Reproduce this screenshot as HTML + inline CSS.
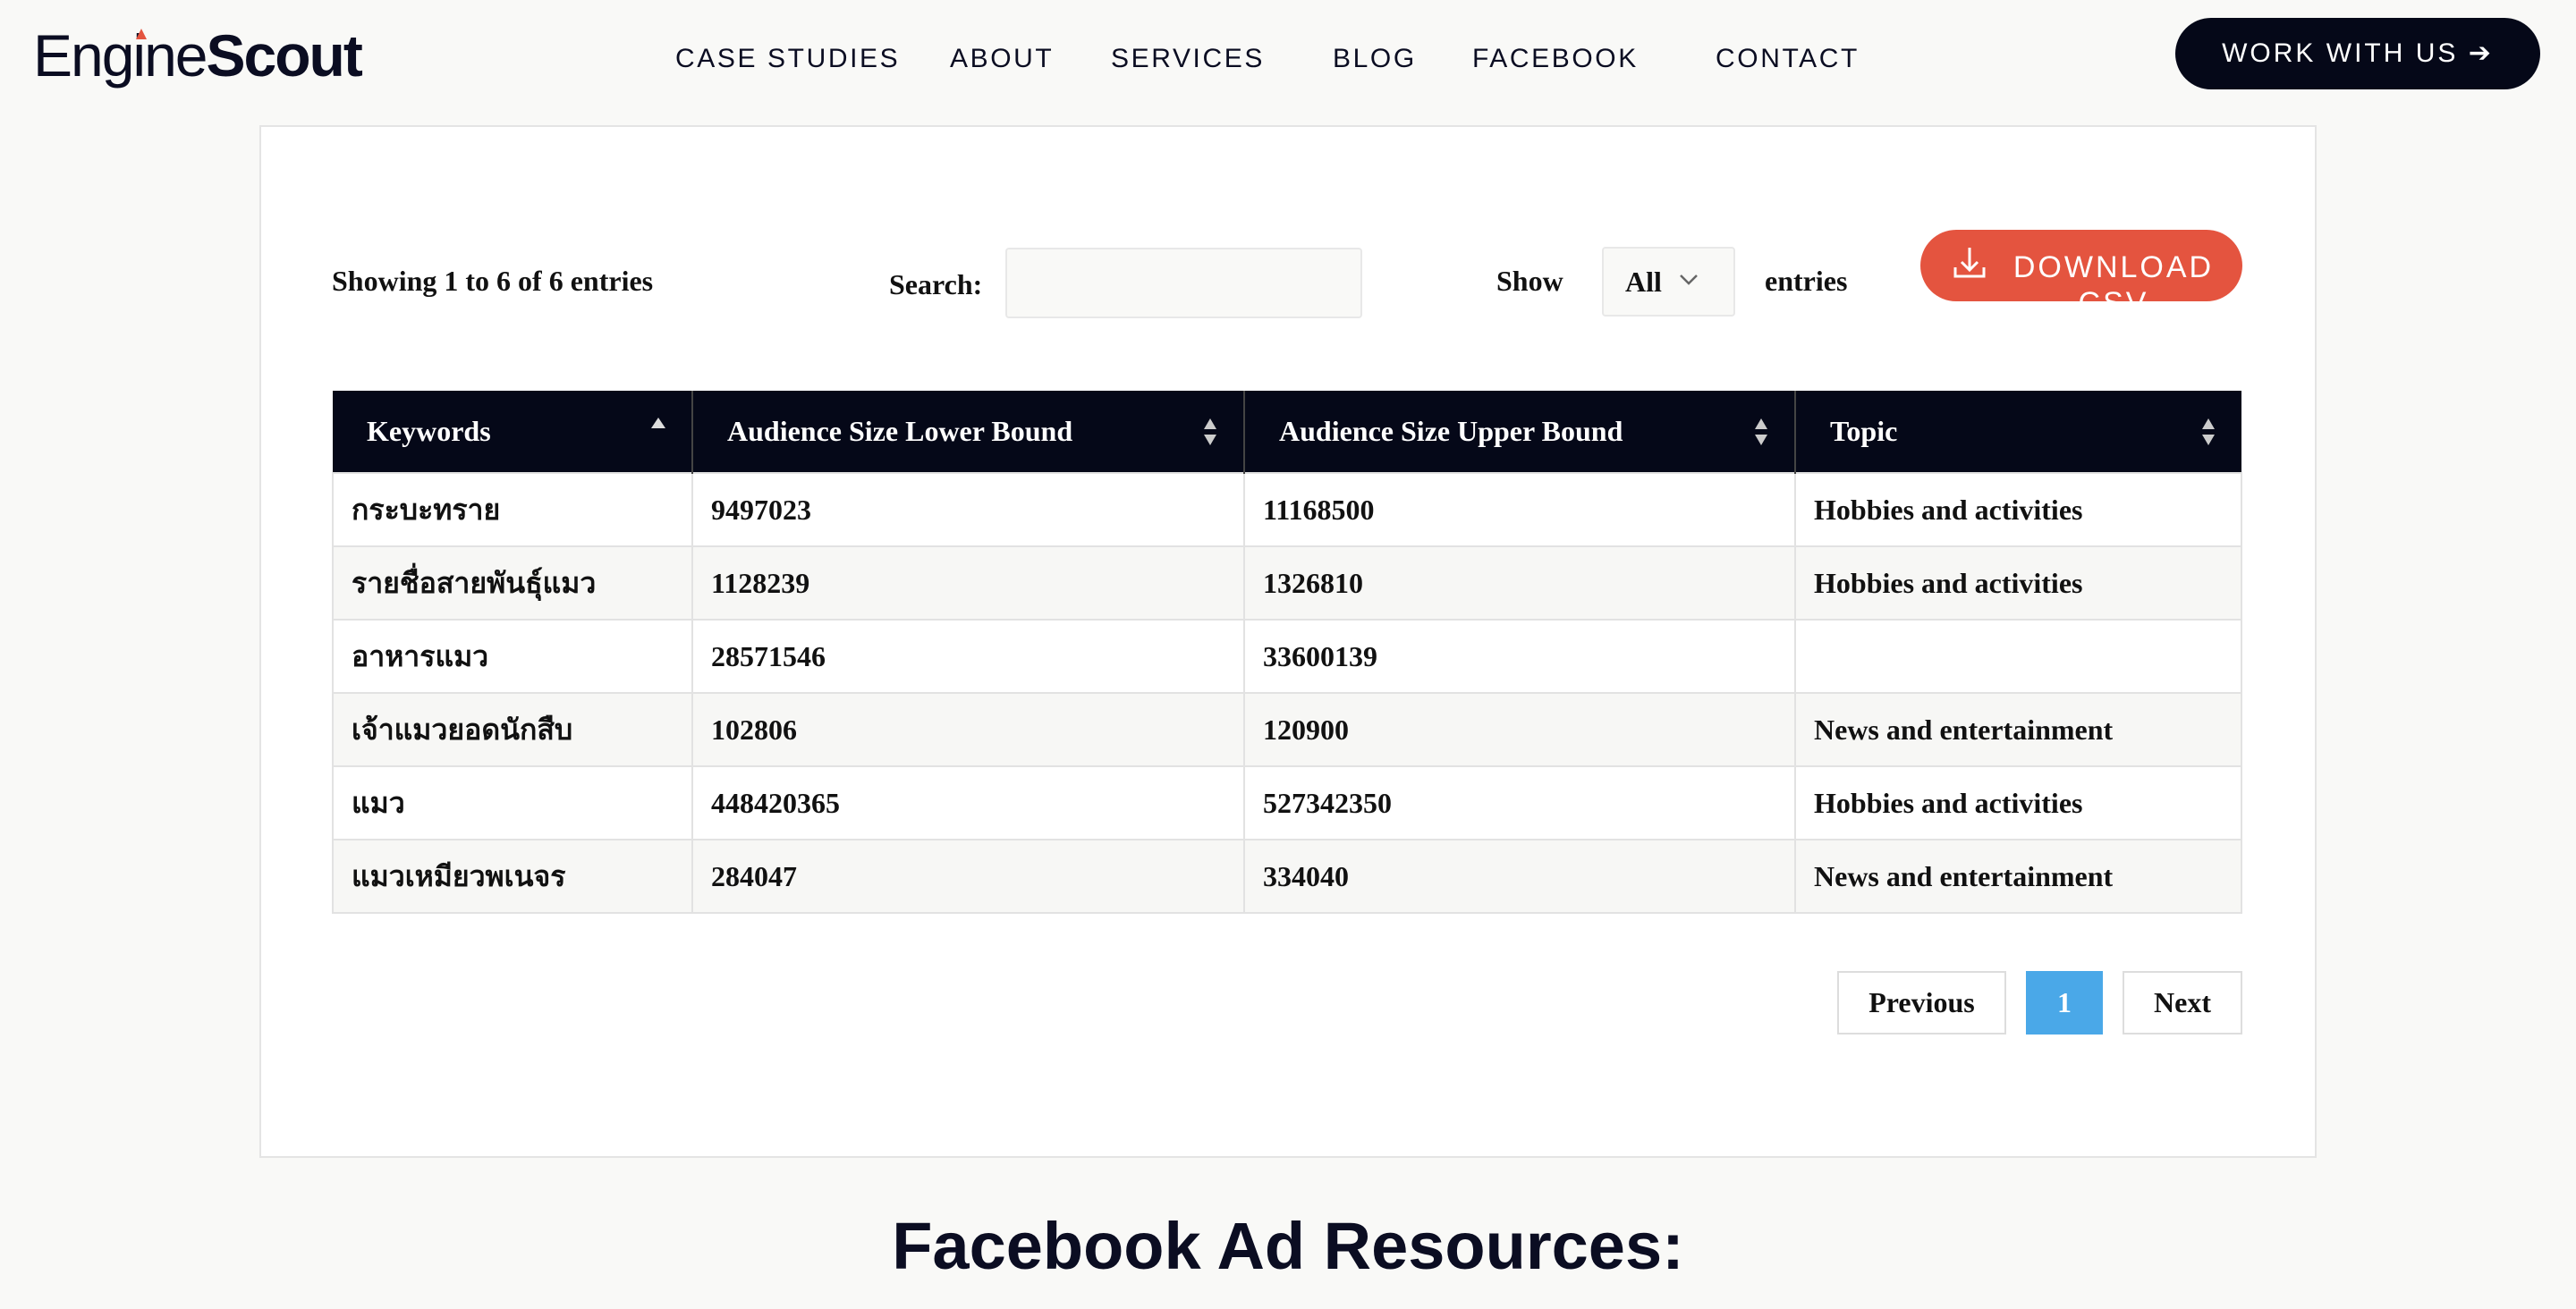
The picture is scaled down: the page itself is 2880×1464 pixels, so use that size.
<!DOCTYPE html>
<html><head><meta charset="utf-8"><style>
*{margin:0;padding:0;box-sizing:border-box}
body{width:2880px;height:1464px;background:#f9f9f7;position:relative;overflow:hidden;font-family:"Liberation Sans",sans-serif;color:#0b0d22}
.abs{position:absolute}
.logo{left:37px;top:22px;font-size:66px;letter-spacing:-2px;color:#0b0d22;line-height:80px}
.logo b{font-weight:700}
.tri{left:152px;top:32px;width:0;height:0;border-left:6px solid transparent;border-right:6px solid transparent;border-bottom:12px solid #e4543f}
.nav{top:48px;font-size:30px;letter-spacing:2.6px;line-height:36px;color:#0b0d22}
.btn{left:2432px;top:20px;width:408px;height:80px;border-radius:40px;background:#050818;color:#fff;font-size:30px;letter-spacing:3px;text-align:center;line-height:80px}
.card{left:290px;top:140px;width:2300px;height:1155px;background:#fff;border:2px solid #e4e4e4}
.serif{font-family:"Liberation Serif","Noto Sans CJK SC",serif;font-weight:700;font-size:32px;color:#111}
.inp{background:#f9f9f7;border:2px solid #e8e8e8;border-radius:4px}
.dl{left:2147px;top:257px;width:360px;height:80px;border-radius:40px;background:#e4543f;color:#fff;font-size:34px;letter-spacing:3px;overflow:hidden}
table{position:absolute;left:371px;top:437px;width:2136px;border-collapse:collapse}
th{background:#050818;color:#fff;height:92px;text-align:left;padding-left:38px;border-left:2px solid #444;position:relative}
td{height:82px;padding-left:20px;border:2px solid #e2e2e2}
tr:nth-child(odd) td{background:#f7f7f5}
.ar{position:absolute;right:28px;top:26px;width:18px}
.pg{top:1086px;height:71px;border:2px solid #ddd;background:#fff;text-align:center;line-height:67px}
</style></head><body>
<div class="abs logo">Engine<b>Scout</b></div>
<div class="abs tri"></div>
<div class="abs nav" style="left:755px">CASE STUDIES</div>
<div class="abs nav" style="left:1062px">ABOUT</div>
<div class="abs nav" style="left:1242px">SERVICES</div>
<div class="abs nav" style="left:1490px">BLOG</div>
<div class="abs nav" style="left:1646px">FACEBOOK</div>
<div class="abs nav" style="left:1918px">CONTACT</div>
<div class="abs btn">WORK WITH US ➔</div>
<div class="abs card"></div>
<div class="abs serif" style="left:371px;top:296px">Showing 1 to 6 of 6 entries</div>
<div class="abs serif" style="left:994px;top:300px">Search:</div>
<div class="abs inp" style="left:1124px;top:277px;width:399px;height:79px"></div>
<div class="abs serif" style="left:1673px;top:296px">Show</div>
<div class="abs inp" style="left:1791px;top:276px;width:149px;height:78px"></div>
<div class="abs serif" style="left:1817px;top:297px">All</div>
<svg class="abs" style="left:1877px;top:306px" width="22" height="14"><path d="M2 2L11 11L20 2" stroke="#666" stroke-width="2.5" fill="none"/></svg>
<div class="abs serif" style="left:1973px;top:296px">entries</div>
<div class="abs dl"><svg class="abs" style="left:36px;top:18px" width="38" height="38"><path d="M19 2V26M10 18L19 27L28 18M3 24V34H35V24" stroke="#fff" stroke-width="3" fill="none"/></svg><div class="abs" style="left:96px;top:22px;line-height:40px;text-align:center;width:240px">DOWNLOAD<br>CSV</div></div>
<table class="serif">
<tr><th style="width:402px;border-left:none;padding-left:38px">Keywords<svg class="ar" height="40" viewBox="0 0 18 40"><path d="M1 16L9 4L17 16Z" fill="#ddd"/></svg></th><th style="width:617px">Audience Size Lower Bound<svg class="ar" height="40" viewBox="0 0 18 40"><path d="M2 17L9 5L16 17Z M2 23L9 35L16 23Z" fill="#ccc"/></svg></th><th style="width:616px">Audience Size Upper Bound<svg class="ar" height="40" viewBox="0 0 18 40"><path d="M2 17L9 5L16 17Z M2 23L9 35L16 23Z" fill="#ccc"/></svg></th><th>Topic<svg class="ar" height="40" viewBox="0 0 18 40"><path d="M2 17L9 5L16 17Z M2 23L9 35L16 23Z" fill="#ccc"/></svg></th></tr>
<tr><td>กระบะทราย</td><td>9497023</td><td>11168500</td><td>Hobbies and activities</td></tr>
<tr><td>รายชื่อสายพันธุ์แมว</td><td>1128239</td><td>1326810</td><td>Hobbies and activities</td></tr>
<tr><td>อาหารแมว</td><td>28571546</td><td>33600139</td><td></td></tr>
<tr><td>เจ้าแมวยอดนักสืบ</td><td>102806</td><td>120900</td><td>News and entertainment</td></tr>
<tr><td>แมว</td><td>448420365</td><td>527342350</td><td>Hobbies and activities</td></tr>
<tr><td>แมวเหมียวพเนจร</td><td>284047</td><td>334040</td><td>News and entertainment</td></tr>
</table>
<div class="abs pg serif" style="left:2054px;width:189px">Previous</div>
<div class="abs pg serif" style="left:2265px;width:86px;background:#4aa8e8;border-color:#4aa8e8;color:#fff">1</div>
<div class="abs pg serif" style="left:2373px;width:134px">Next</div>
<div class="abs" style="left:0;width:2880px;top:1346px;text-align:center;font-size:74px;font-weight:700;line-height:96px;color:#0b0d22">Facebook Ad Resources:</div>
</body></html>
